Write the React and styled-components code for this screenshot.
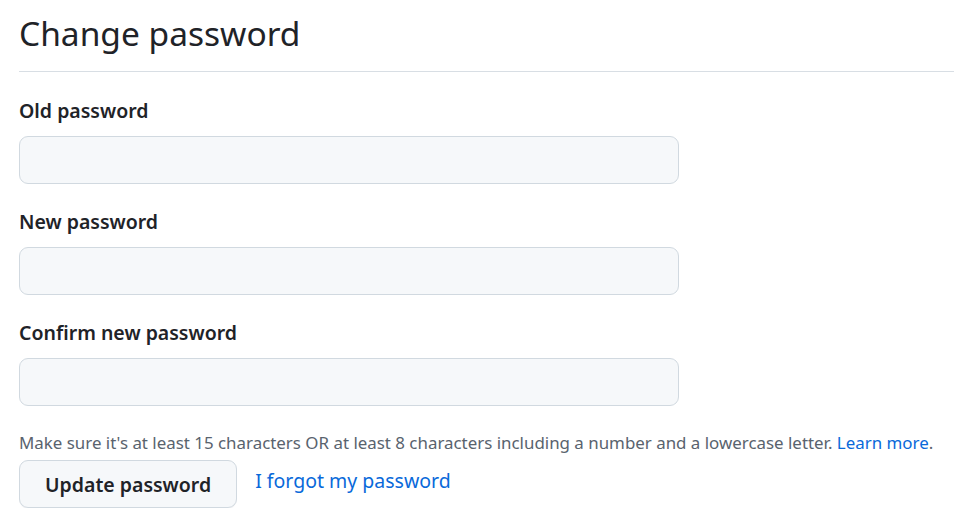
import React from "react";
import styled, { createGlobalStyle } from "styled-components";

const GlobalStyle = createGlobalStyle`
  html, body {
    margin: 0;
    padding: 0;
    background: #ffffff;
  }
  body {
    font-family: "Noto Sans", "Open Sans", sans-serif;
    color: #1f2328;
  }
`;

const Page = styled.div`
  padding: 10px 0 0 19px;
`;

const Subhead = styled.div`
  border-bottom: 1px solid #d8dee4;
  padding-bottom: 15px;
  margin-bottom: 24px;
`;

const Heading = styled.h2`
  margin: 0;
  font-size: 33.5px;
  font-weight: 400;
  line-height: 46px;
`;

const Form = styled.form`
  display: flex;
  flex-direction: column;
`;

const Group = styled.div`
  display: flex;
  flex-direction: column;
  gap: 10px;
  margin-bottom: 23px;
`;

const Label = styled.label`
  font-size: 19.5px;
  font-weight: 600;
  line-height: 30px;
`;

const Input = styled.input`
  box-sizing: border-box;
  width: 660px;
  height: 48px;
  padding: 0 18px;
  font: inherit;
  font-size: 21px;
  background: #f6f8fa;
  border: 1px solid #d1d9e0;
  border-radius: 9px;
  outline: none;
`;

const Note = styled.p`
  margin: 0 0 4px;
  font-size: 16.9px;
  line-height: 27px;
  color: #59636e;
`;

const Link = styled.a`
  color: #0969da;
  text-decoration: none;
`;

const Actions = styled.div`
  display: flex;
  align-items: flex-start;
  gap: 18px;
`;

const Button = styled.button`
  box-sizing: border-box;
  height: 48px;
  padding: 0 25px;
  font: inherit;
  font-size: 19.5px;
  font-weight: 600;
  color: #1f2328;
  background: #f6f8fa;
  border: 1px solid #d1d9e0;
  border-radius: 9px;
  box-shadow: 0 1px 0 rgba(31, 35, 40, 0.04);
`;

const ForgotLink = styled(Link)`
  font-size: 19.5px;
  line-height: 42px;
`;

export default function App() {
  return (
    <>
      <GlobalStyle />
      <Page>
        <Subhead>
          <Heading>Change password</Heading>
        </Subhead>
        <Form onSubmit={(e) => e.preventDefault()}>
          <Group>
            <Label htmlFor="old_password">Old password</Label>
            <Input id="old_password" type="password" />
          </Group>
          <Group>
            <Label htmlFor="new_password">New password</Label>
            <Input id="new_password" type="password" />
          </Group>
          <Group>
            <Label htmlFor="confirm_password">Confirm new password</Label>
            <Input id="confirm_password" type="password" />
          </Group>
          <Note>
            Make sure it's at least 15 characters OR at least 8 characters
            including a number and a lowercase letter.{" "}
            <Link href="#">Learn more</Link>.
          </Note>
          <Actions>
            <Button type="submit">Update password</Button>
            <ForgotLink href="#">I forgot my password</ForgotLink>
          </Actions>
        </Form>
      </Page>
    </>
  );
}
